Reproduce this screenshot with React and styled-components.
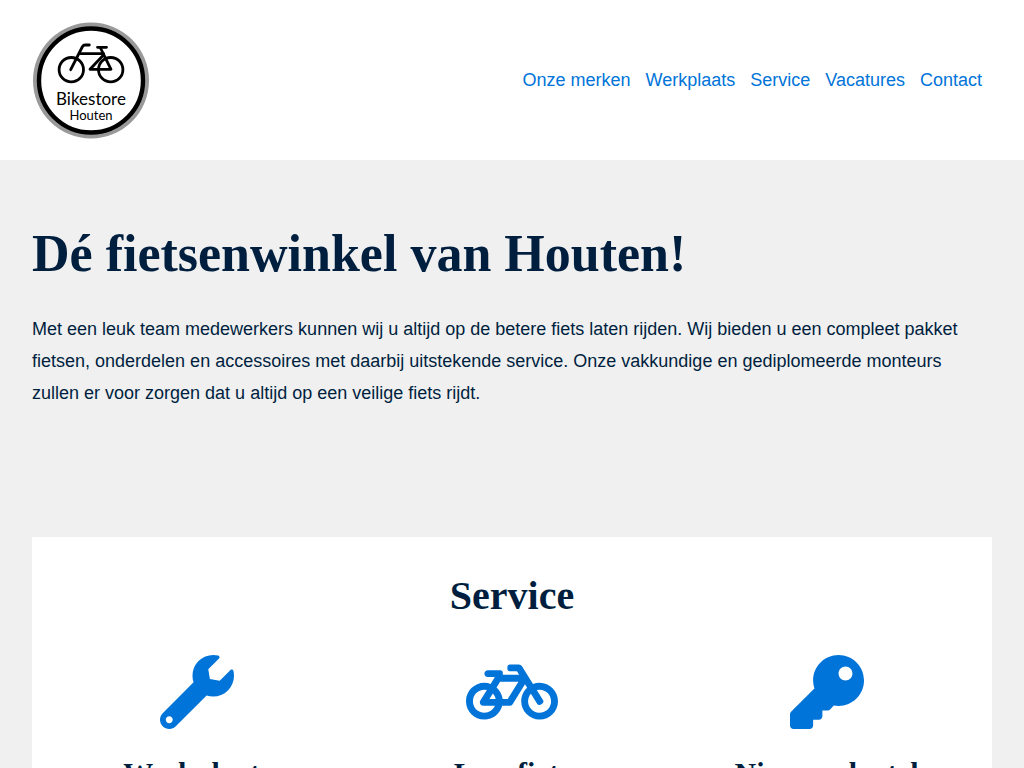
import React from "react";
import styled, { createGlobalStyle } from "styled-components";
import { FaWrench, FaBicycle, FaKey } from "react-icons/fa";

const GlobalStyle = createGlobalStyle`
  * {
    box-sizing: border-box;
  }
  body {
    margin: 0;
    background-color: #f0f0f0;
    color: #001f3f;
    font-family: "Liberation Sans", Arial, sans-serif;
    font-size: 18px;
    line-height: 32px;
  }
  h1, h2, h3, p {
    margin: 0;
  }
  h1, h2, h3 {
    font-family: "Liberation Serif", "Times New Roman", serif;
    font-weight: bold;
  }
`;

const Header = styled.header`
  display: flex;
  align-items: center;
  justify-content: space-between;
  padding: 20px 32px;
  background-color: white;
`;

const LogoLink = styled.a`
  display: block;
  line-height: 0;
`;

const LogoText = styled.text`
  font-family: Lato, sans-serif;
  font-size: ${(props) => props.$size}px;
  text-anchor: middle;
`;

const Nav = styled.nav`
  display: flex;
  flex-wrap: wrap;
  gap: 0 15px;
  padding: 0 10px;
`;

const NavLink = styled.a`
  color: #0074d9;
  text-decoration: none;
  &:hover {
    text-decoration: underline;
  }
`;

const Intro = styled.section`
  padding: 64px 32px 128px;
`;

const Title = styled.h1`
  margin-bottom: 29px;
  font-size: 52px;
  line-height: 60px;
`;

const Services = styled.section`
  margin: 0 32px;
  padding: 35px 16px;
  background-color: white;
  text-align: center;
`;

const SectionTitle = styled.h2`
  font-size: 40px;
  line-height: 48px;
`;

const Columns = styled.div`
  display: grid;
  grid-template-columns: repeat(3, 1fr);
  gap: 16px;
  margin-top: 35px;
`;

const Service = styled.article`
  display: flex;
  flex-direction: column;
  align-items: center;
  gap: 26px;
`;

const ServiceIcon = styled.div`
  color: #0074d9;
  line-height: 0;
  svg {
    width: ${(props) => (props.$wide ? 92 : 74)}px;
    height: 74px;
  }
`;

const ServiceTitle = styled.h3`
  font-size: 30px;
  line-height: 36px;
`;

const links = ["Onze merken", "Werkplaats", "Service", "Vacatures", "Contact"];

const services = [
  { title: "Werkplaats", Icon: FaWrench },
  { title: "Leenfiets", Icon: FaBicycle, wide: true },
  { title: "Nieuwe sleutel", Icon: FaKey },
];

function Logo() {
  return (
    <svg width="118" height="120" viewBox="0 0 118 120" role="img" aria-label="Bikestore Houten">
      <circle cx="59" cy="60.5" r="58" fill="#999" />
      <circle cx="59" cy="60.5" r="52" fill="white" stroke="black" strokeWidth="4.4" />
      <g fill="none" stroke="black" strokeWidth="2.8" strokeLinecap="round" strokeLinejoin="round">
        <circle cx="39.3" cy="49.7" r="12.2" />
        <circle cx="78.7" cy="49.7" r="12.2" />
        <path d="M38.7 49.7L50.5 26.5Q51.5 25 53 25H57.3" />
        <path d="M48.7 33.7H71.5M65.5 27.3H74.5" />
        <path d="M68.5 28L79 49.3H58L71.5 35" />
      </g>
      <LogoText x="59" y="85" $size={17}>Bikestore</LogoText>
      <LogoText x="59" y="100" $size={13}>Houten</LogoText>
    </svg>
  );
}

function App() {
  return (
    <>
      <GlobalStyle />
      <Header>
        <LogoLink href="#">
          <Logo />
        </LogoLink>
        <Nav>
          {links.map((link) => (
            <NavLink key={link} href="#">{link}</NavLink>
          ))}
        </Nav>
      </Header>
      <main>
        <Intro>
          <Title>Dé fietsenwinkel van Houten!</Title>
          <p>
            Met een leuk team medewerkers kunnen wij u altijd op de betere fiets laten rijden. Wij
            bieden u een compleet pakket fietsen, onderdelen en accessoires met daarbij uitstekende
            service. Onze vakkundige en gediplomeerde monteurs zullen er voor zorgen dat u altijd op
            een veilige fiets rijdt.
          </p>
        </Intro>
        <Services>
          <SectionTitle>Service</SectionTitle>
          <Columns>
            {services.map(({ title, Icon, wide }) => (
              <Service key={title}>
                <ServiceIcon $wide={wide}>
                  <Icon aria-hidden="true" />
                </ServiceIcon>
                <ServiceTitle>{title}</ServiceTitle>
              </Service>
            ))}
          </Columns>
        </Services>
      </main>
    </>
  );
}

export default App;
